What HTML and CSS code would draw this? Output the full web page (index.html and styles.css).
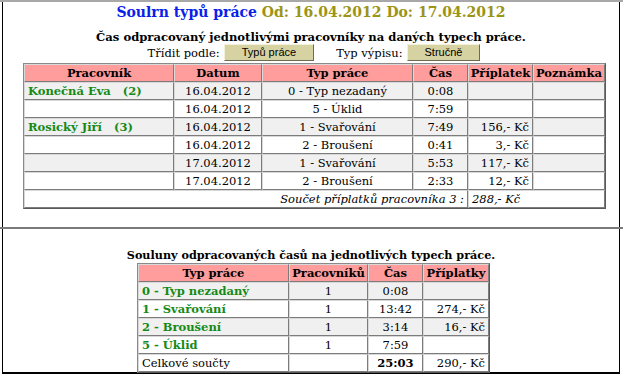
FILE: index.html
```html
<!DOCTYPE html>
<html>
<head>
<meta charset="utf-8">
<link rel="stylesheet" href="styles.css">
</head>
<body>
<div class="top-rule"></div>
<div class="panel panel-top">
  <h1 class="title"><span class="title-blue">Soulrn typů práce</span> <span class="title-olive">Od: 16.04.2012 Do: 17.04.2012</span></h1>
  <div class="caption">Čas odpracovaný jednotlivými pracovníky na daných typech práce.</div>
  <div class="controls">
    <span class="label">Třídit podle:</span>
    <span class="btn btn-wide">Typů práce</span>
    <span class="label label-gap">Typ výpisu:</span>
    <span class="btn">Stručně</span>
  </div>
  <table class="grid main">
    <colgroup>
      <col class="c1"><col class="c2"><col class="c3"><col class="c4"><col class="c5"><col class="c6">
    </colgroup>
    <tr class="head"><th>Pracovník</th><th>Datum</th><th>Typ práce</th><th>Čas</th><th>Příplatek</th><th>Poznámka</th></tr>
    <tr class="odd"><td class="name">Konečná Eva&nbsp;&nbsp;&nbsp;(2)</td><td class="ctr">16.04.2012</td><td class="ctr">0 - Typ nezadaný</td><td class="ctr">0:08</td><td class="num"></td><td></td></tr>
    <tr><td></td><td class="ctr">16.04.2012</td><td class="ctr">5 - Úklid</td><td class="ctr">7:59</td><td class="num"></td><td></td></tr>
    <tr class="odd"><td class="name">Rosický Jiří&nbsp;&nbsp;&nbsp;(3)</td><td class="ctr">16.04.2012</td><td class="ctr">1 - Svařování</td><td class="ctr">7:49</td><td class="num">156,- Kč</td><td></td></tr>
    <tr><td></td><td class="ctr">16.04.2012</td><td class="ctr">2 - Broušení</td><td class="ctr">0:41</td><td class="num">3,- Kč</td><td></td></tr>
    <tr class="odd"><td></td><td class="ctr">17.04.2012</td><td class="ctr">1 - Svařování</td><td class="ctr">5:53</td><td class="num">117,- Kč</td><td></td></tr>
    <tr><td></td><td class="ctr">17.04.2012</td><td class="ctr">2 - Broušení</td><td class="ctr">2:33</td><td class="num">12,- Kč</td><td></td></tr>
    <tr><td colspan="4" class="sum-label">Součet příplatků pracovníka 3 :</td><td colspan="2" class="sum-val">288,- Kč</td></tr>
  </table>
</div>
<div class="mid-rule"></div>
<div class="panel panel-bottom">
  <div class="caption caption2">Souluny odpracovaných časů na jednotlivých typech práce.</div>
  <table class="grid summary">
    <colgroup>
      <col class="s1"><col class="s2"><col class="s3"><col class="s4">
    </colgroup>
    <tr class="head"><th>Typ práce</th><th>Pracovníků</th><th>Čas</th><th>Příplatky</th></tr>
    <tr class="odd"><td class="name">0 - Typ nezadaný</td><td class="ctr">1</td><td class="ctr">0:08</td><td class="num"></td></tr>
    <tr><td class="name">1 - Svařování</td><td class="ctr">1</td><td class="ctr">13:42</td><td class="num">274,- Kč</td></tr>
    <tr class="odd"><td class="name">2 - Broušení</td><td class="ctr">1</td><td class="ctr">3:14</td><td class="num">16,- Kč</td></tr>
    <tr><td class="name">5 - Úklid</td><td class="ctr">1</td><td class="ctr">7:59</td><td class="num"></td></tr>
    <tr><td class="total">Celkové součty</td><td></td><td class="ctr bold">25:03</td><td class="num">290,- Kč</td></tr>
  </table>
</div>
</body>
</html>
```
FILE: styles.css
```css
html, body {
  margin: 0;
  padding: 0;
  background: #ffffff;
}
body {
  width: 623px;
  height: 378px;
  overflow: hidden;
  font-family: "DejaVu Serif", serif;
  font-size: 11.5px;
  color: #000;
}
.top-rule {
  height: 2px;
  background: #a8a8a8;
}
.panel {
  margin: 0 3px 0 2px;
  border-left: 1px solid #000;
  border-right: 1px solid #000;
  display: flex;
  flex-direction: column;
  align-items: center;
}
.panel-top {
  height: 225px;
}
.mid-rule {
  height: 2px;
  background: #7a7a7a;
}
.panel-bottom {
  height: 143px;
  border-bottom: 2px solid #000;
}
.title {
  margin: 1px 0 0 0;
  font-size: 14px;
  font-weight: bold;
  line-height: 18px;
  white-space: nowrap;
}
.title-blue { color: #0a1fe8; }
.title-olive { color: #9c9414; }
.caption {
  margin-top: 9px;
  font-size: 11.6px;
  font-weight: bold;
  line-height: 14px;
  white-space: nowrap;
}
.controls {
  display: flex;
  align-items: center;
  height: 17px;
  margin-top: 0;
  margin-left: 6px;
  white-space: nowrap;
}
.label-gap { margin-left: 22px; }
.btn {
  margin-left: 4px;
  font-family: "Liberation Sans", Arial, sans-serif;
  font-size: 11px;
  line-height: 13px;
  background: #d6d2a2;
  border: 1px solid;
  border-color: #f2f0d8 #6e6c50 #6e6c50 #f2f0d8;
  padding: 1px 17px;
}
.btn-wide { padding: 1px 17px; }
.grid {
  border-collapse: separate;
  border-spacing: 0;
  table-layout: fixed;
  border: 1px solid;
  border-color: #8a8a8a #5a5a5a #5a5a5a #8a8a8a;
}
.main {
  width: 581px;
  margin-top: 2px;
  margin-left: 7px;
}
.c1 { width: 150px; }
.c2 { width: 88px; }
.c3 { width: 151px; }
.c4 { width: 55px; }
.c5 { width: 65px; }
.c6 { width: 72px; }
.grid th, .grid td {
  height: 18px;
  padding: 0 3px;
  box-sizing: border-box;
  border: 1px solid;
  border-color: #d8d8d8 #7c7c7c #7c7c7c #d8d8d8;
  white-space: nowrap;
  overflow: hidden;
  line-height: 14px;
  vertical-align: middle;
}
.grid th {
  background: #ff9c9c;
  font-weight: bold;
  font-size: 11.5px;
  padding: 0 1px;
  text-align: center;
}
.grid tr.odd td { background: #f0f0f0; }
.ctr { text-align: center; }
.num { text-align: right; }
.bold { font-weight: bold; }
.grid td.name {
  color: #168a16;
  font-weight: bold;
  font-size: 11.5px;
  text-align: left;
}
.sum-label {
  text-align: right;
  font-style: italic;
}
.sum-val {
  text-align: left;
  font-style: italic;
}
.caption2 {
  margin-top: 19px;
  font-size: 11.2px;
}
.summary {
  width: 351px;
  margin-top: 1px;
  margin-left: 5px;
}
.s1 { width: 151px; }
.s2 { width: 79px; }
.s3 { width: 55px; }
.s4 { width: 66px; }
.total { text-align: left; }
```
